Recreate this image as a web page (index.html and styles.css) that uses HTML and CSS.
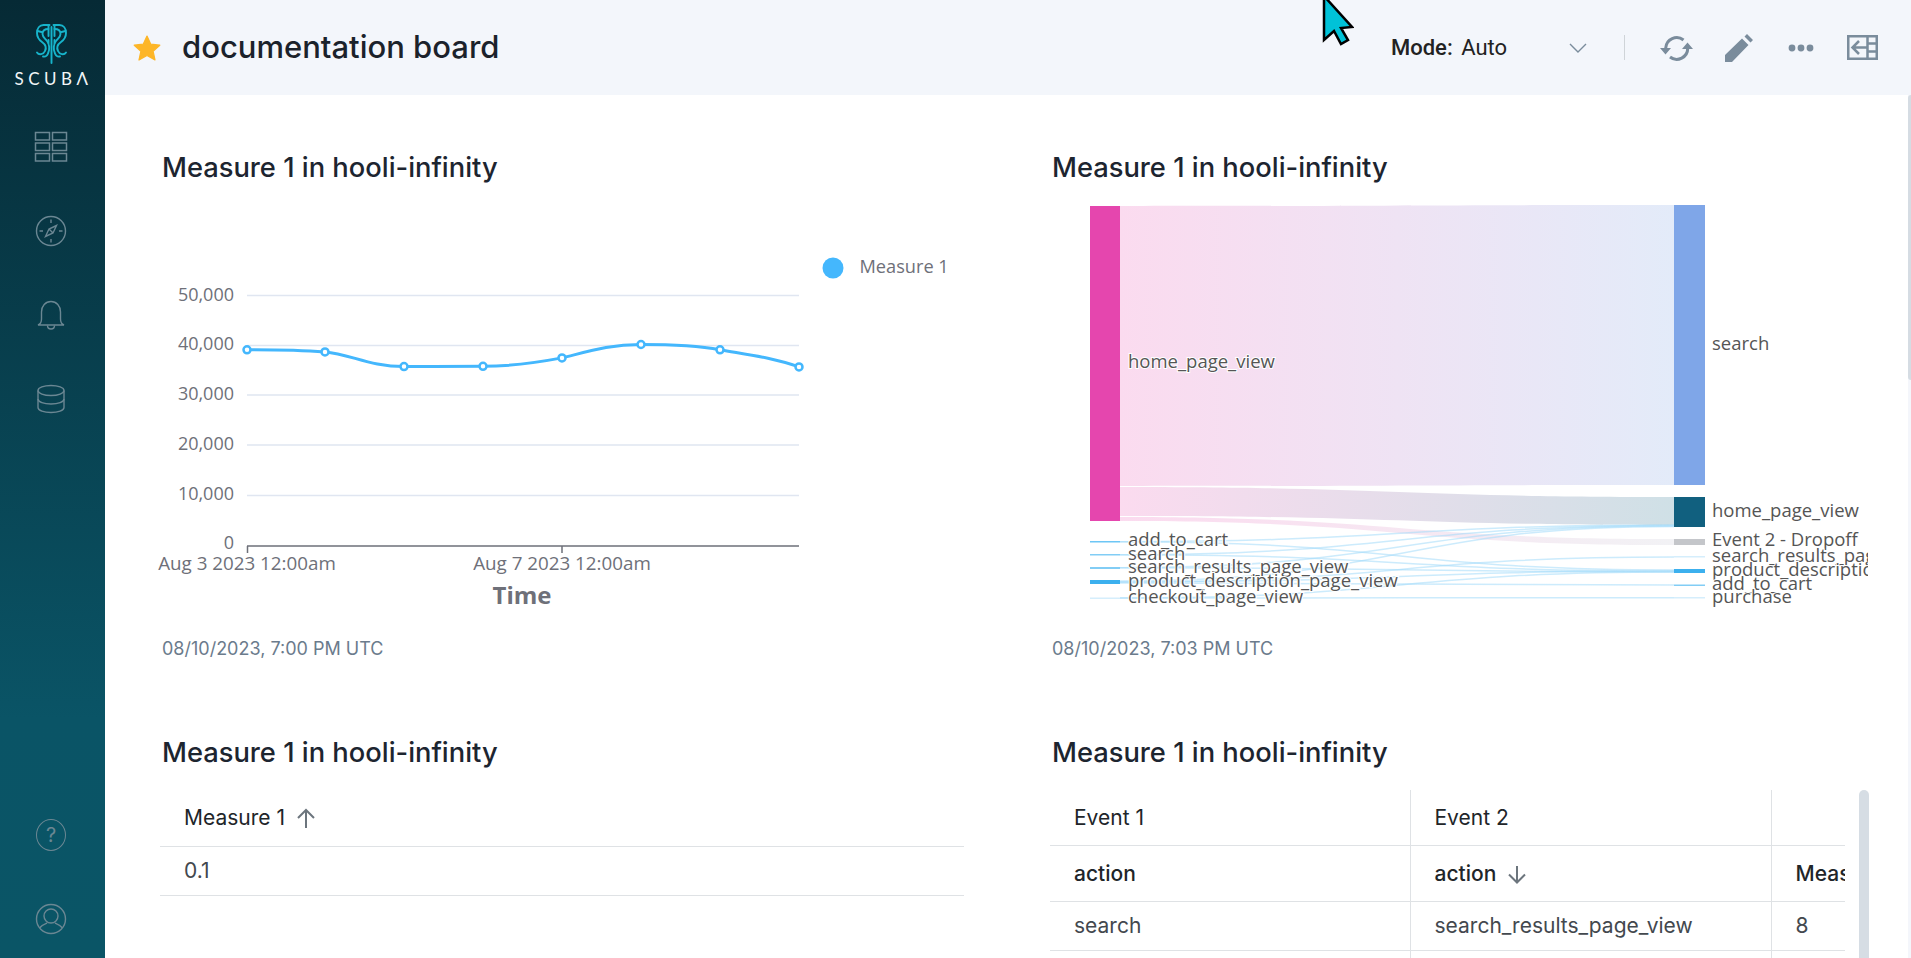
FILE: index.html
```html
<!DOCTYPE html>
<html lang="en">
  <head>
    <meta charset="UTF-8" />
    <title>documentation board</title>
    <link rel="stylesheet" href="styles.css">
  </head>
  <body>
    <div class="app">
      <aside class="side">
        <div class="logo">
          <svg width="40" height="44" viewBox="32 20 40 44" fill="none" stroke="#17b4cb" stroke-width="1.900" stroke-linecap="round" stroke-linejoin="round">
            <path d="M51.500 26v36" />
            <g>
              <path d="M49.500 24h-6c-4 0-6.500 3.500-6.500 8 0 3.500 1.500 6.500 5 9 3.500 2.500 4.500 6 3 9-1.500 3.500-6 4.500-8 1.500" />
              <path d="M48.500 28c-3.500 0-6 1.500-6 5 0 3 2.500 4.500 4.500 7 2.500 3 3 8.500 1 12.500-1 2.500-3 3.500-5 3" />
              <path d="M48.500 24v11M48.500 39v3" />
              <path d="M37.500 30l4 1" />
            </g>
            <g transform="matrix(-1 0 0 1 103 0)">
              <path d="M49.500 24h-6c-4 0-6.500 3.500-6.500 8 0 3.500 1.500 6.500 5 9 3.500 2.500 4.500 6 3 9-1.500 3.500-6 4.500-8 1.500" />
              <path d="M48.500 28c-3.500 0-6 1.500-6 5 0 3 2.500 4.500 4.500 7 2.500 3 3 8.500 1 12.500-1 2.500-3 3.500-5 3" />
              <path d="M48.500 24v11M48.500 39v3" />
              <path d="M37.500 30l4 1" />
            </g>
          </svg>
          <div class="logo-name">SCUBΛ</div>
        </div>
        <nav class="side-nav">
          <a href="#">
            <svg width="34" height="32" viewBox="0 0 34 32" fill="none" stroke="#6b8793" stroke-width="1.500">
              <rect x="1.500" y="1.500" width="14" height="7.500" />
              <rect x="18.500" y="1.500" width="14" height="7.500" />
              <rect x="1.500" y="12" width="14" height="7.500" />
              <rect x="18.500" y="12" width="14" height="7.500" />
              <rect x="1.500" y="22.500" width="14" height="7.500" />
              <rect x="18.500" y="22.500" width="14" height="7.500" />
            </svg>
          </a>
          <a href="#">
            <svg width="32" height="32" viewBox="0 0 32 32" fill="none" stroke="#6b8793" stroke-width="1.400">
              <circle cx="16" cy="16" r="14.500" />
              <path d="M16 4.500V8M16 24v3.500M4.500 16H8M24 16h3.500" />
              <path d="M21.500 10.500l-7.500 3.500-3.500 7.500 7.500-3.500zM14 14l4 4" />
            </svg>
          </a>
          <a href="#">
            <svg width="30" height="30" viewBox="0 0 30 30" fill="none" stroke="#6b8793" stroke-width="1.400">
              <path d="M2 25h26c-2.500-1-3.500-3-3.500-6v-7C24.500 6 20.500 1.500 15 1.500S5.500 6 5.500 12v7c0 3-1 5-3.500 6z" />
              <path d="M11.500 25.500c0 2 1.500 3.500 3.500 3.500s3.500-1.500 3.500-3.500" />
            </svg>
          </a>
          <a href="#">
            <svg width="30" height="30" viewBox="0 0 30 30" fill="none" stroke="#6b8793" stroke-width="1.400">
              <ellipse cx="15" cy="6.500" rx="13" ry="5" />
              <path d="M2 6.500v17c0 3 6 5 13 5s13-2 13-5v-17" />
              <path d="M2 15c0 3 6 5 13 5s13-2 13-5" />
            </svg>
          </a>
        </nav>
        <div class="side-bottom">
          <a href="#" class="help">?</a>
          <a href="#">
            <svg width="32" height="32" viewBox="0 0 32 32" fill="none" stroke="#6b8793" stroke-width="1.400">
              <circle cx="16" cy="16" r="14.500" />
              <circle cx="16" cy="13" r="7" />
              <path d="M4.500 25c2-3 6.500-4.500 7.500-5M27.500 25c-2-3-6.500-4.500-7.500-5" />
            </svg>
          </a>
        </div>
      </aside>

      <div class="main">
        <header class="top">
          <svg class="star" width="28" height="26" viewBox="0 0 28 26">
            <path d="M14 1l3.800 8.200 9 1-6.700 6 1.900 8.800L14 20.500 6 25l1.900-8.800-6.700-6 9-1z" fill="#fdb628" stroke="#fdb628" stroke-width="1.200" stroke-linejoin="round" />
          </svg>
          <h1>documentation board</h1>
          <div class="tools">
            <div class="mode"><b>Mode:</b> Auto</div>
            <svg class="chev" width="18" height="10" viewBox="0 0 18 10" fill="none" stroke="#7a8c9c" stroke-width="1.400">
              <path d="M1 1l8 8 8-8" />
            </svg>
            <span class="sep"></span>
            <svg class="tool-sync" width="36" height="28" viewBox="0 0 36 28" fill="none" stroke="#7a8c9c" stroke-width="3">
              <path d="M6.700 14A11 11 0 0 1 24.500 6" />
              <path d="M28.700 14A11 11 0 0 1 11 23" />
              <path d="M1 14h11l-5.500 6.500zM23 15h11l-5.500-6.500z" fill="#7a8c9c" stroke="none" />
            </svg>
            <svg class="tool-pen" width="28" height="28" viewBox="0 0 28 28">
              <path d="M0 28v-7L17 4.500l6.500 6.500L7 28zM19.500 2.500L22 0l6 6-2.500 2.500z" fill="#7a8c9c" />
            </svg>
            <svg class="tool-dots" width="26" height="8" viewBox="0 0 26 8">
              <circle cx="4" cy="4" r="3.400" fill="#7a8c9c" />
              <circle cx="13" cy="4" r="3.400" fill="#7a8c9c" />
              <circle cx="22" cy="4" r="3.400" fill="#7a8c9c" />
            </svg>
            <svg class="tool-panel" width="31" height="25" viewBox="0 0 31 25" fill="none" stroke="#7a8c9c" stroke-width="2.500">
              <rect x="1.250" y="1.250" width="28.500" height="22.500" />
              <path d="M20.500 1v23M21 8.500h8M21 16.500h8" />
              <path d="M20 12.500H6M12 6l-6.500 6.500L12 19" />
            </svg>
          </div>
        </header>

        <section class="board">
          <article class="card">
            <h2>Measure 1 in hooli-infinity</h2>
            <svg class="chart chart-line" width="820" height="453" viewBox="160 184 820 453">
              <g stroke="#e0e6f1" stroke-width="1.500">
                <path d="M247 295.500H799M247 345.500H799M247 395H799M247 445H799M247 495.500H799" />
              </g>
              <path d="M247 546H799M247.500 546v7M562 546v7" stroke="#6e7079" stroke-width="1.500" fill="none" />
              <g class="axis" text-anchor="end">
                <text x="234" y="301">50,000</text>
                <text x="234" y="350">40,000</text>
                <text x="234" y="400">30,000</text>
                <text x="234" y="450">20,000</text>
                <text x="234" y="500">10,000</text>
                <text x="234" y="549">0</text>
              </g>
              <g class="axis axis-x" text-anchor="middle">
                <text x="247" y="570">Aug 3 2023 12:00am</text>
                <text x="562" y="570">Aug 7 2023 12:00am</text>
              </g>
              <text class="axis-name" x="522" y="604" text-anchor="middle">Time</text>
              <path d="M247 349.800C275 349.800 305 350.500 325 351.900C350 354 370 366.600 404 366.600C430 366.600 460 366.300 483 366.300C510 366.300 535 363 562 357.900C590 351 610 344.500 641 344.500C670 344.500 695 345 720 349.800C750 355 775 358 799 366.900" fill="none" stroke="#44b7fd" stroke-width="3" />
              <g fill="#fff" stroke="#44b7fd" stroke-width="2.500">
                <circle cx="247" cy="349.800" r="3.500" />
                <circle cx="325" cy="351.900" r="3.500" />
                <circle cx="404" cy="366.600" r="3.500" />
                <circle cx="483" cy="366.300" r="3.500" />
                <circle cx="562" cy="357.900" r="3.500" />
                <circle cx="641" cy="344.500" r="3.500" />
                <circle cx="720" cy="349.800" r="3.500" />
                <circle cx="799" cy="366.900" r="3.500" />
              </g>
              <circle cx="833" cy="268" r="10.500" fill="#44b7fd" />
              <text class="legend" x="859.500" y="273">Measure 1</text>
            </svg>
            <p class="stamp">08/10/2023, 7:00 PM UTC</p>
          </article>

          <article class="card">
            <h2>Measure 1 in hooli-infinity</h2>
            <svg class="chart" width="818" height="453" viewBox="1050 184 818 453">
              <defs>
                <linearGradient id="linkA">
                  <stop offset="0" stop-color="#fbdbef" />
                  <stop offset="1" stop-color="#e3ebf9" />
                </linearGradient>
                <linearGradient id="linkB">
                  <stop offset="0" stop-color="#fbdbef" />
                  <stop offset="1" stop-color="#cfe0e6" />
                </linearGradient>
                <linearGradient id="linkC">
                  <stop offset="0" stop-color="#fbdbef" />
                  <stop offset="1" stop-color="#f2f2f5" />
                </linearGradient>
              </defs>
              <path d="M1120 206C1400 206 1400 205 1674 205V485C1400 485 1400 486 1120 486z" fill="url(#linkA)" />
              <path d="M1120 487C1400 487 1400 497 1674 497V525C1400 525 1400 516 1120 516z" fill="url(#linkB)" />
              <path d="M1120 517C1400 517 1400 539 1674 539V545C1400 545 1400 521 1120 521z" fill="url(#linkC)" />
              <g class="thin" fill="none">
                <path d="M1120 541.700C1400 541.700 1400 525 1674 525" />
                <path d="M1120 541.700C1400 541.700 1400 570 1674 570" />
                <path d="M1120 554.700C1400 554.700 1400 525.500 1674 525.500" />
                <path d="M1120 554.700C1400 554.700 1400 571 1674 571" />
                <path d="M1120 567.700C1400 567.700 1400 526 1674 526" />
                <path d="M1120 567.700C1400 567.700 1400 572 1674 572" />
                <path d="M1120 581C1400 581 1400 526.500 1674 526.500" />
                <path d="M1120 582C1400 582 1400 557 1674 557" />
                <path d="M1120 583C1400 583 1400 585 1674 585" />
                <path d="M1120 582C1400 582 1400 571 1674 571" />
                <path d="M1120 598C1400 598 1400 597.700 1674 597.700" />
                <path d="M1120 598C1400 598 1400 572 1674 572" />
              </g>
              <rect x="1090" y="206" width="30" height="315" fill="#e546ae" />
              <rect x="1674" y="205" width="31" height="280" fill="#7fa6e8" />
              <rect x="1674" y="497" width="31" height="30" fill="#11607f" />
              <rect x="1674" y="539" width="31" height="6" fill="#c4c6ca" />
              <rect x="1674" y="556" width="31" height="1.500" fill="#d5eefc" />
              <rect x="1674" y="569" width="31" height="4" fill="#3cb0ee" />
              <rect x="1674" y="584.500" width="31" height="1.500" fill="#82cdf5" />
              <rect x="1674" y="597" width="31" height="1.500" fill="#d5eefc" />
              <rect x="1090" y="541" width="30" height="1.500" fill="#6dc6f5" />
              <rect x="1090" y="554" width="30" height="1.500" fill="#82cdf5" />
              <rect x="1090" y="567" width="30" height="2" fill="#82cdf5" />
              <rect x="1090" y="580" width="30" height="4" fill="#3cb0ee" />
              <rect x="1090" y="597.500" width="30" height="1.500" fill="#d5eefc" />
              <g class="flow">
                <text x="1128" y="368">home_page_view</text>
                <text x="1128" y="546">add_to_cart</text>
                <text x="1128" y="560">search</text>
                <text x="1128" y="573">search_results_page_view</text>
                <text x="1128" y="587">product_description_page_view</text>
                <text x="1128" y="603">checkout_page_view</text>
                <text x="1712" y="350">search</text>
                <text x="1712" y="517">home_page_view</text>
                <text x="1712" y="546">Event 2 - Dropoff</text>
                <text x="1712" y="562">search_results_page_view</text>
                <text x="1712" y="576">product_description_page_view</text>
                <text x="1712" y="590">add_to_cart</text>
                <text x="1712" y="603">purchase</text>
              </g>
            </svg>
            <p class="stamp">08/10/2023, 7:03 PM UTC</p>
          </article>

          <article class="card">
            <h2>Measure 1 in hooli-infinity</h2>
            <div class="tbl">
              <table class="single">
                <thead>
                  <tr>
                    <th>Measure 1
                      <svg class="sort" width="18" height="20" viewBox="0 0 18 20" fill="none" stroke="#6c757d" stroke-width="2">
                        <path d="M9 20V2M1 10l8-8 8 8" />
                      </svg>
                    </th>
                  </tr>
                </thead>
                <tbody>
                  <tr><td>0.1</td></tr>
                </tbody>
              </table>
            </div>
          </article>

          <article class="card">
            <h2>Measure 1 in hooli-infinity</h2>
            <div class="tbl-scroll">
              <div class="tbl tbl-clip">
                <table class="pivot">
                  <thead>
                    <tr class="row-a">
                      <th>Event 1</th>
                      <th>Event 2</th>
                      <th></th>
                    </tr>
                    <tr class="row-b">
                      <th>action</th>
                      <th>action
                        <svg class="sort" width="18" height="18" viewBox="0 0 18 18" fill="none" stroke="#6c757d" stroke-width="2">
                          <path d="M9 0v16M1 8.500l8 8 8-8" />
                        </svg>
                      </th>
                      <th>Measure 1</th>
                    </tr>
                  </thead>
                  <tbody>
                    <tr>
                      <td>search</td>
                      <td>search_results_page_view</td>
                      <td>8</td>
                    </tr>
                    <tr>
                      <td></td>
                      <td></td>
                      <td></td>
                    </tr>
                  </tbody>
                </table>
              </div>
              <div class="thumb"></div>
            </div>
          </article>
        </section>
      </div>
      <div class="page-track"><div class="page-thumb"></div></div>
      <svg class="pointer" width="32" height="46" viewBox="0 0 32 46">
        <path d="M2 -4V40L12 31 19 44 26 40 19 28 30 27z" fill="#00c2d8" stroke="#000" stroke-width="2.500" stroke-linejoin="miter" />
      </svg>
    </div>
  </body>
</html>
```

FILE: styles.css
```css
* {
  box-sizing: border-box;
}
html,
body {
  margin: 0;
  height: 100%;
  overflow: hidden;
}
body {
  font-family: Inter, "Liberation Sans", sans-serif;
  color: #212529;
  background: #fff;
}

.app {
  display: flex;
  height: 958px;
  position: relative;
  overflow: hidden;
}

/* sidebar */
.side {
  width: 105px;
  flex: none;
  display: flex;
  flex-direction: column;
  align-items: center;
  background: linear-gradient(180deg, #062a35 0%, #0a5466 75%, #0a5566 100%);
}
.logo {
  display: flex;
  flex-direction: column;
  align-items: center;
  padding: 21px 1px 0 0;
}
.logo-name {
  margin-top: 4px;
  padding-left: 3px;
  font-family: Lato, sans-serif;
  font-size: 17px;
  line-height: 20px;
  letter-spacing: 4.5px;
  color: #f2f6f7;
}
.side-nav {
  display: flex;
  flex-direction: column;
  align-items: center;
  margin: 42px 3px 0 0;
}
.side-nav a,
.side-bottom a {
  display: flex;
  justify-content: center;
  align-items: center;
  height: 32px;
}
.side-nav a + a {
  margin-top: 52px;
}
.side-bottom {
  margin: auto 3px 0 0;
  padding-bottom: 23px;
  display: flex;
  flex-direction: column;
  align-items: center;
  gap: 52px;
}
.help {
  width: 30px;
  border: 1.4px solid #6b8793;
  border-radius: 50%;
  color: #6b8793;
  font-size: 20px;
  text-decoration: none;
  line-height: 1;
}

/* top bar */
.main {
  flex: 1;
  min-width: 0;
}
.top {
  height: 95px;
  background: #f3f6fb;
  display: flex;
  align-items: center;
  padding: 0 33px 0 28px;
}
.star {
  flex: none;
}
h1 {
  margin: 0 0 2px 21px;
  font-size: 31px;
  font-weight: 500;
  color: #1b222b;
}
.tools {
  margin-left: auto;
  display: flex;
  align-items: center;
}
.mode {
  width: 177.5px;
  font-family: Roboto, sans-serif;
  font-size: 22px;
  color: #222;
}
.mode b {
  font-weight: 500;
  margin-right: 3px;
}
.sep {
  width: 1px;
  height: 25px;
  background: #cfd4d8;
  margin: 0 34px 0 37.5px;
}
.tool-pen {
  margin-left: 30px;
}
.tool-dots {
  margin-left: 35px;
}
.tool-panel {
  margin-left: 33px;
}

/* board */
.board {
  display: grid;
  grid-template-columns: 890px 1fr;
  row-gap: 74px;
  padding: 55px 0 0 55px;
}
.card h2 {
  margin: 0;
  padding: 1px 0 0 2px;
  height: 34px;
  font-size: 27.3px;
  line-height: 34px;
  font-weight: 500;
  color: #1d2530;
}
.chart {
  display: block;
}
.chart-line {
  overflow: visible;
}
.stamp {
  margin: 0;
  padding-left: 2px;
  font-size: 18px;
  line-height: 24px;
  color: #6b7b8c;
}
.axis text,
.legend {
  font-family: "Open Sans", sans-serif;
  font-size: 18px;
  fill: #6e7079;
}
.axis-x text {
  font-size: 18.800px;
}
.legend {
  font-size: 18.200px;
}
.axis-name {
  font-family: "Open Sans", sans-serif;
  font-size: 24px;
  font-weight: 700;
  fill: #6e7079;
}
.flow text {
  font-family: "Open Sans", sans-serif;
  font-size: 18.500px;
  fill: #555;
  stroke: #fff;
  stroke-width: 2px;
  paint-order: stroke;
}
.thin path {
  stroke: #a3dbf9;
  stroke-width: 1.5px;
  opacity: 0.55;
}

/* tables */
.tbl {
  margin-top: 21px;
}
table {
  border-collapse: collapse;
  table-layout: fixed;
  font-size: 21px;
}
th {
  font-weight: 400;
  text-align: left;
  color: #212529;
}
td {
  color: #43484e;
}
th,
td {
  padding: 0 0 0 24px;
  white-space: nowrap;
  overflow: hidden;
  border-bottom: 1.5px solid #dfe2e5;
}
.sort {
  margin-left: 6px;
  vertical-align: -3px;
}
.single {
  width: 804px;
}
.single th {
  height: 56px;
}
.single td {
  height: 49px;
}
.tbl-scroll {
  display: flex;
  align-items: flex-start;
  gap: 14px;
}
.tbl-clip {
  width: 795px;
  overflow: hidden;
}
.pivot {
  width: 921px;
}
.pivot th:nth-child(1),
.pivot td:nth-child(1) {
  width: 360px;
}
.pivot th:nth-child(2),
.pivot td:nth-child(2) {
  width: 361px;
}
.pivot th + th,
.pivot td + td {
  border-left: 1.5px solid #dfe2e5;
}
.row-a th {
  height: 55px;
}
.row-b th {
  height: 56px;
  font-weight: 500;
}
.pivot td {
  height: 49px;
}
.thumb {
  margin-top: 21px;
  width: 10px;
  height: 168px;
  background: #d6dde4;
  border-radius: 5px 5px 0 0;
}
.page-track {
  position: absolute;
  right: 0;
  top: 95px;
  bottom: 0;
  width: 3px;
  background: #f4f6fb;
}
.page-thumb {
  height: 285px;
  background: #d5dce3;
  border-radius: 3px 0 0 3px;
}
.pointer {
  position: absolute;
  left: 1322px;
  top: 0;
}
```
